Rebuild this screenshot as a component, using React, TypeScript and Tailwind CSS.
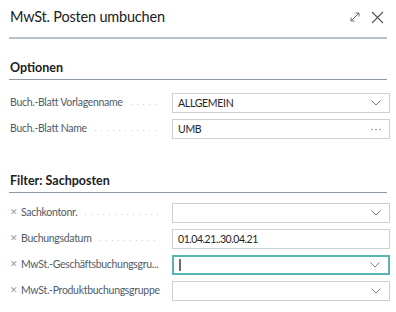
import React from 'react';

const Chevron = () => (
  <svg width="10" height="6" viewBox="0 0 10 6" fill="none" className="shrink-0">
    <polyline points="0.5,0.5 5,5 9.5,0.5" stroke="#7a7a7a" strokeWidth="1" />
  </svg>
);

const Dots = () => (
  <svg width="10" height="3" viewBox="0 0 10 3" className="shrink-0">
    <circle cx="1" cy="1.5" r="0.8" fill="#8a8a8a" />
    <circle cx="5" cy="1.5" r="0.8" fill="#8a8a8a" />
    <circle cx="9" cy="1.5" r="0.8" fill="#8a8a8a" />
  </svg>
);

const Leader = () => (
  <div className="flex-1 min-w-0 h-px mt-[9px] ml-[8px] bg-[linear-gradient(to_right,#cdcdcd_1px,transparent_1px)] bg-[length:6px_1px] bg-repeat-x" />
);

interface FieldProps {
  label: string;
  value?: string;
  kind: 'select' | 'lookup' | 'text';
  filter?: boolean;
  focused?: boolean;
  tight?: boolean;
}

const Field: React.FC<FieldProps> = ({ label, value, kind, filter, focused, tight }) => (
  <div className="flex items-center h-[20px]">
    <div className="w-[162px] flex items-start pl-[10px] pr-[4px] text-[10.5px] tracking-[-0.3px] leading-[14px] text-[#505b69] -mt-[3px]">
      {filter && <span className="text-[#9a9a9a] mr-[3px] text-[9px] tracking-normal">✕</span>}
      <span className="whitespace-nowrap">{label}</span>
      <Leader />
    </div>
    <div
      className={`ml-[10px] w-[218px] h-[20px] flex items-center pl-[5px] pr-[8px] bg-white ${
        focused ? 'border-2 border-[#5ab5b2]' : 'border border-[#cfcfcf]'
      }`}
    >
      <div
        className={`flex-1 text-[10.5px] text-[#262626] leading-none flex items-center ${
          tight ? 'tracking-[-0.45px]' : 'tracking-[-0.3px]'
        }`}
      >
        {focused && <div className="w-[2px] h-[12px] bg-[#6b6b6b]" />}
        {value}
      </div>
      {kind === 'select' && <Chevron />}
      {kind === 'lookup' && <Dots />}
    </div>
  </div>
);

export default function App() {
  return (
    <div className="w-[396px] h-[312px] bg-white overflow-hidden font-['Lato',sans-serif]">
      <div className="h-[37px] flex items-center justify-between pl-[10px] pr-[12px] pb-[3px]">
        <h1 className="text-[14.5px] tracking-[-0.2px] text-[#212121]">MwSt. Posten umbuchen</h1>
        <div className="flex items-center gap-[10px]">
          <svg width="12" height="12" viewBox="0 0 12 12" fill="none">
            <path d="M2 10 L10 2 M6.5 2 H10 V5.5 M2 6.5 V10 H5.5" stroke="#6a6a6a" strokeWidth="1" />
          </svg>
          <svg width="13" height="13" viewBox="0 0 13 13" fill="none">
            <path d="M1 1 L12 12 M12 1 L1 12" stroke="#555" strokeWidth="1.1" />
          </svg>
        </div>
      </div>
      <div className="mx-[9px] h-[2px] bg-[#b8c0cb]" />

      <div className="mt-[20px] mx-[9px] border-b border-[#8e98a5] pb-[2px] pl-px">
        <h2 className="text-[12.5px] leading-[18px] font-bold text-[#212121]">Optionen</h2>
      </div>
      <div className="mt-[13px] flex flex-col gap-[6px]">
        <Field label="Buch.-Blatt Vorlagenname" value="ALLGEMEIN" kind="select" />
        <Field label="Buch.-Blatt Name" value="UMB" kind="lookup" />
      </div>

      <div className="mt-[33px] mx-[9px] border-b border-[#8e98a5] pb-[2px] pl-px">
        <h2 className="text-[12.5px] leading-[18px] font-bold text-[#212121]">Filter: Sachposten</h2>
      </div>
      <div className="mt-[10px] flex flex-col gap-[6px]">
        <Field filter label="Sachkontonr." kind="select" />
        <Field filter label="Buchungsdatum" value="01.04.21..30.04.21" kind="text" tight />
        <Field filter label="MwSt.-Geschäftsbuchungsgru..." kind="select" focused />
        <Field filter label="MwSt.-Produktbuchungsgruppe" kind="select" />
      </div>
    </div>
  );
}
